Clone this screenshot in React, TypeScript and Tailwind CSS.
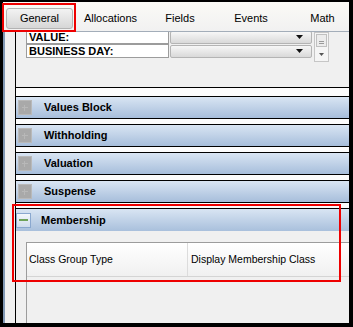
import React from 'react';

const tabs = [
  { label: 'Allocations', w: 'w-[75px]' },
  { label: 'Fields', w: 'w-[64px]' },
  { label: 'Events', w: 'w-[78px]' },
  { label: 'Math', w: 'w-[65px]' },
];
const bars = ['Values Block', 'Withholding', 'Valuation', 'Suspense'];

const FormRow = ({ label }: { label: string }) => (
  <div className="flex items-center h-[14px]">
    <div className="w-[143px] h-[14px] bg-white border border-[#9c9c9c] pl-[2px] text-[11px] leading-[12px] font-bold text-black whitespace-nowrap">
      {label}
    </div>
    <div className="ml-[1px] w-[142px] h-[13px] border border-[#b4b4b4] rounded-[2px] bg-gradient-to-b from-[#f7f7f7] to-[#d9d9d9] flex items-center justify-end pr-[8px]">
      <svg width="7" height="4" viewBox="0 0 7 4">
        <path d="M0 0h7L3.5 4z" fill="#111" />
      </svg>
    </div>
  </div>
);

const Collapsed = () => (
  <div className="w-[14px] h-[15px] bg-[#a9a9a9] border border-[#b9b9b9] flex items-center justify-center">
    <div className="w-[6px] h-[6px] relative">
      <div className="absolute left-0 right-0 top-[2px] h-[1px] bg-[#b8b8b8]" />
      <div className="absolute top-0 bottom-0 left-[2px] w-[1px] bg-[#b8b8b8]" />
    </div>
  </div>
);

export default function App() {
  return (
    <div className="relative w-[353px] h-[327px] bg-black pt-[2px] pl-[3px] pr-[4px] pb-[4px] font-['Liberation_Sans',Arial,sans-serif]">
      <div className="flex flex-col h-full bg-[#f0f0f0] overflow-hidden">
        {/* Tabs */}
        <div className="h-[30px] shrink-0 border-b border-[#a3adb9] bg-gradient-to-b from-[#fbfaf6] to-[#f1f1f1] flex items-center pl-[3px] pt-[3px] overflow-hidden">
          <div className="w-[67px] h-[21px] shrink-0 rounded-[3px] border border-[#b3b3b3] bg-gradient-to-b from-[#f3f3f3] to-[#d6d6d6] flex items-center justify-center text-[11px] text-black">
            General
          </div>
          {tabs.map((t) => (
            <div key={t.label} className={`${t.w} h-[21px] shrink-0 flex items-center justify-center text-[11px] text-black`}>
              {t.label}
            </div>
          ))}
        </div>

        <div className="flex flex-1 min-h-0">
          <div className="w-[12px] border-l-2 border-[#8198b4] bg-[#f0f0f0]" />
          <div className="flex-1 flex flex-col border-l border-black bg-[#fcfcfc] min-w-0">
            {/* Top form panel */}
            <div className="h-[56px] shrink-0 bg-[#f0f0f0] border-b border-black overflow-hidden">
              <div className="flex items-start ml-[10px] -mt-[2px]">
                <div className="flex flex-col">
                  <FormRow label="VALUE:" />
                  <FormRow label="BUSINESS DAY:" />
                </div>
                <div className="ml-[2px] mt-[2px] w-[15px] h-[30px] border border-[#c6c6c6] bg-[#f5f5f5] flex flex-col items-center">
                  <div className="w-[11px] h-[13px] mt-[1px] border border-[#c0c0c0] bg-[#ececec] flex flex-col items-center justify-end pb-[2px] gap-[1px]">
                    <div className="w-[5px] h-[1px] bg-[#9a9a9a]" />
                    <div className="w-[5px] h-[1px] bg-[#9a9a9a]" />
                  </div>
                  <svg className="mt-[6px]" width="5" height="3" viewBox="0 0 5 3">
                    <path d="M0 0h5L2.5 3z" fill="#555" />
                  </svg>
                </div>
              </div>
            </div>

            <div className="h-[8px] shrink-0" />

            {bars.map((b) => (
              <div key={b} className="h-[23px] shrink-0 mb-[5px] border-y border-black bg-gradient-to-b from-[#d9e5f3] to-[#a7bedb] flex items-center pl-[2px]">
                <Collapsed />
                <span className="ml-[12px] text-[11px] font-bold text-black">{b}</span>
              </div>
            ))}

            {/* Membership */}
            <div className="h-[23px] shrink-0 border-t border-black bg-gradient-to-b from-[#d9e5f3] to-[#a9c0dc] flex items-center">
              <div className="w-[15px] h-[15px] border border-[#8aa8cf] bg-gradient-to-b from-[#f4f8fc] to-[#cfdcec] flex items-center justify-center">
                <div className="w-[9px] h-[2px] bg-[#6fa35a]" />
              </div>
              <span className="ml-[10px] text-[11px] font-bold text-black">Membership</span>
            </div>
            <div className="flex-1 bg-[#f0f0f0] pt-[11px] pl-[10px] flex flex-col">
              <div className="flex-1 border-l border-t border-[#9c9c9c] flex flex-col">
                <div className="h-[34px] flex bg-gradient-to-b from-[#ffffff] to-[#f0f0f0] border-b border-[#d4d4d4]">
                  <div className="w-[161px] border-r border-[#dcdcdc] flex items-center pl-[2px] text-[10.5px] text-black whitespace-nowrap">
                    Class Group Type
                  </div>
                  <div className="flex-1 flex items-center pl-[3px] text-[10.5px] text-black whitespace-nowrap">
                    Display Membership Class
                  </div>
                </div>
              </div>
            </div>
          </div>
        </div>
      </div>

      {/* Red annotation boxes */}
      <div className="absolute left-[2px] top-[3px] w-[74px] h-[29px] border-2 border-[#ee0000]" />
      <div className="absolute left-[12px] top-[204px] w-[329px] h-[78px] border-2 border-[#ee0000]" />
    </div>
  );
}
